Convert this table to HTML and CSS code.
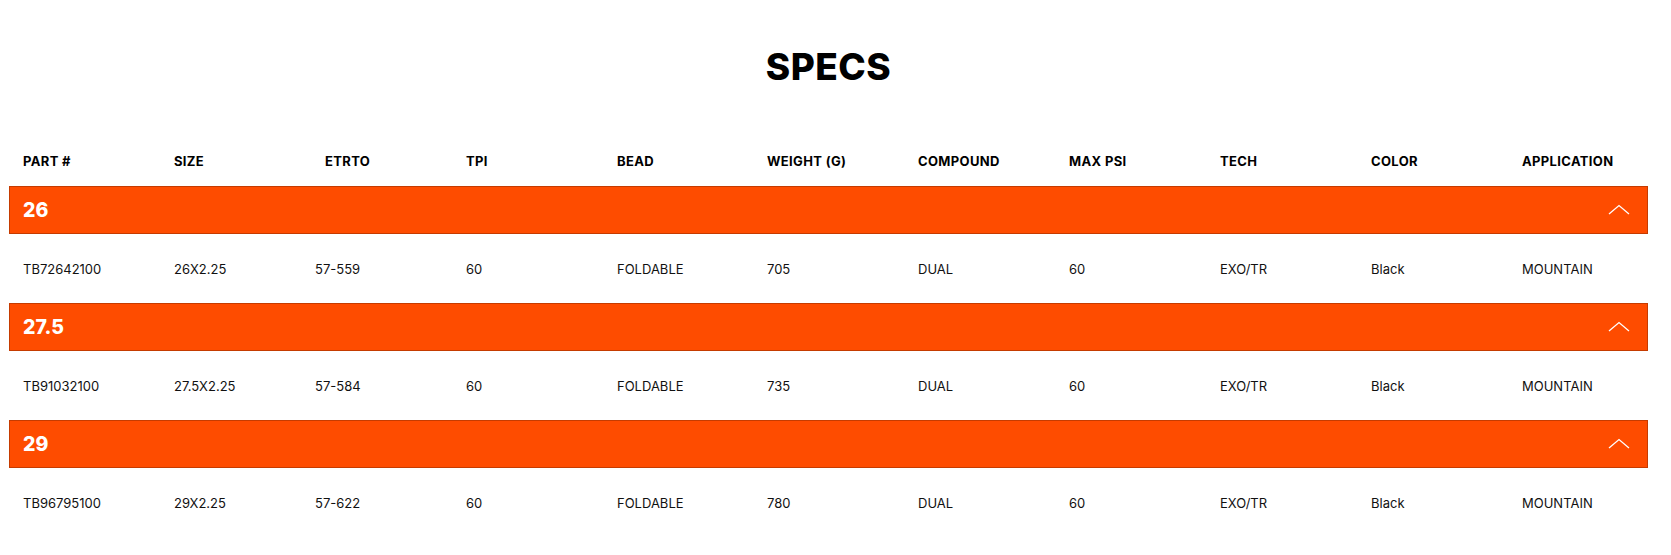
FILE: index.html
```html
<!DOCTYPE html>
<html>
<head>
<meta charset="utf-8">
<link rel="stylesheet" href="styles.css">
</head>
<body>
<div class="specs">
  <h1 class="title">SPECS</h1>
  <div class="row head">
    <div>PART #</div><div>SIZE</div><div class="shift">ETRTO</div><div>TPI</div><div>BEAD</div><div>WEIGHT (G)</div><div>COMPOUND</div><div>MAX PSI</div><div>TECH</div><div>COLOR</div><div>APPLICATION</div>
  </div>

  <div class="bar"><span>26</span><svg class="chev" width="22" height="11" viewBox="0 0 22 11"><polyline points="1,10 11,1.5 21,10" fill="none" stroke="#fff" stroke-width="1.3"/></svg></div>
  <div class="row data">
    <div>TB72642100</div><div>26X2.25</div><div>57-559</div><div>60</div><div>FOLDABLE</div><div>705</div><div>DUAL</div><div>60</div><div>EXO/TR</div><div>Black</div><div>MOUNTAIN</div>
  </div>

  <div class="bar"><span>27.5</span><svg class="chev" width="22" height="11" viewBox="0 0 22 11"><polyline points="1,10 11,1.5 21,10" fill="none" stroke="#fff" stroke-width="1.3"/></svg></div>
  <div class="row data">
    <div>TB91032100</div><div>27.5X2.25</div><div>57-584</div><div>60</div><div>FOLDABLE</div><div>735</div><div>DUAL</div><div>60</div><div>EXO/TR</div><div>Black</div><div>MOUNTAIN</div>
  </div>

  <div class="bar"><span>29</span><svg class="chev" width="22" height="11" viewBox="0 0 22 11"><polyline points="1,10 11,1.5 21,10" fill="none" stroke="#fff" stroke-width="1.3"/></svg></div>
  <div class="row data">
    <div>TB96795100</div><div>29X2.25</div><div>57-622</div><div>60</div><div>FOLDABLE</div><div>780</div><div>DUAL</div><div>60</div><div>EXO/TR</div><div>Black</div><div>MOUNTAIN</div>
  </div>
</div>
</body>
</html>
```
FILE: styles.css
```css
html, body {
  margin: 0;
  padding: 0;
  background: #fff;
}
body {
  font-family: Inter, "Liberation Sans", sans-serif;
  color: #111;
}
.specs {
  margin-left: 9px;
  width: 1639px;
}
.title {
  margin: 44px 0 47px;
  height: 45px;
  line-height: 45px;
  text-align: center;
  font-size: 37px;
  font-weight: 800;
  letter-spacing: 0.5px;
  color: #000;
}
.row {
  display: grid;
  grid-template-columns: 151px 141px 151px 151px 150px 151px 151px 151px 151px 151px 1fr;
  padding-left: 14px;
  align-items: center;
}
.head {
  height: 50px;
  font-size: 13px;
  font-weight: 700;
  letter-spacing: 0.35px;
  color: #000;
}
.head .shift {
  margin-left: 10px;
}
.data {
  height: 69px;
  font-size: 13px;
  font-weight: 400;
  color: #111;
}
.bar {
  box-sizing: border-box;
  height: 48px;
  background: #fe4c00;
  border: 1px solid #c53b00;
  display: flex;
  align-items: center;
  justify-content: space-between;
  padding: 0 17px 0 13px;
  color: #fff;
  font-size: 19.5px;
  font-weight: 800;
}
.chev {
  display: block;
  margin-top: -2px;
}
```
